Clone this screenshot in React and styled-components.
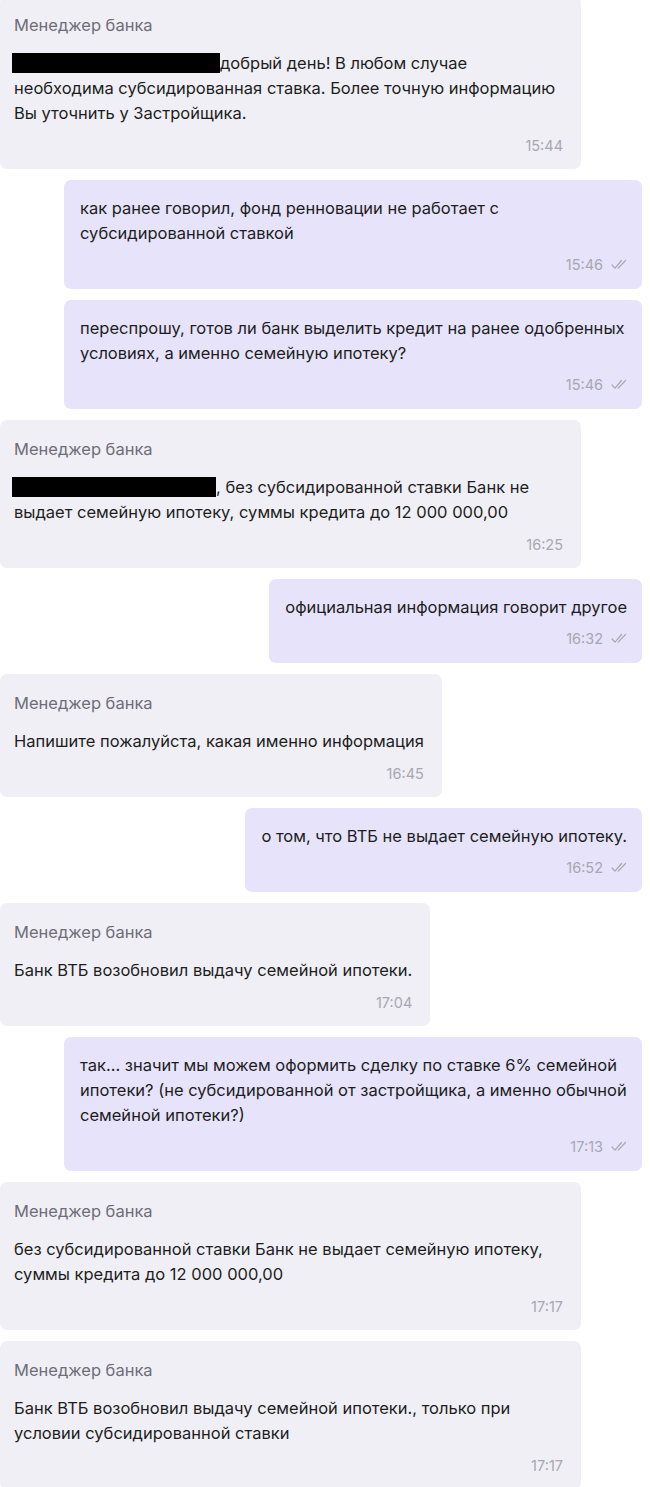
import React from "react";
import styled, { createGlobalStyle } from "styled-components";

const GlobalStyle = createGlobalStyle`
  html, body {
    margin: 0;
    padding: 0;
    background: #ffffff;
  }
  body {
    font-family: Inter, "Noto Sans", "DejaVu Sans", sans-serif;
    -webkit-font-smoothing: antialiased;
  }
`;

const Chat = styled.div`
  display: flex;
  flex-direction: column;
  gap: 11px;
  width: 650px;
  margin-top: -4px;
  overflow: hidden;
`;

const Bubble = styled.div`
  box-sizing: border-box;
  border-radius: 7px;
  background: ${(p) => (p.$own ? "#e6e3fa" : "#f0eff5")};
  align-self: ${(p) => (p.$own ? "flex-end" : "flex-start")};
  margin-right: ${(p) => (p.$own ? "8px" : "0")};
  width: ${(p) => (p.$full ? (p.$own ? "578px" : "581px") : "auto")};
  padding: ${(p) => (p.$own ? "15.5px 15px 15px 16px" : "19px 18px 14px 14px")};
  display: flex;
  flex-direction: column;
`;

const Sender = styled.div`
  font-size: 16.5px;
  line-height: 20px;
  color: #6e6d78;
  margin-bottom: 15.5px;
`;

const Text = styled.div`
  font-size: 16.5px;
  line-height: 25px;
  color: #1d1d22;
  white-space: nowrap;
`;

const Redacted = styled.span`
  display: inline-block;
  width: ${(p) => p.$w}px;
  height: 20px;
  background: #000;
  vertical-align: -4px;
  margin-left: -2px;
`;

const Meta = styled.div`
  display: flex;
  justify-content: flex-end;
  align-items: center;
  gap: 8px;
  margin-top: ${(p) => (p.$own ? "8.5px" : "9.5px")};
  height: 20px;
  font-size: 14.5px;
  color: #a8a7b1;
`;

const Checks = () => (
  <svg width="16" height="11" viewBox="0 0 16 11" fill="none">
    <path
      d="M1 6 L4 9.2 L10.5 1.5 M7.2 9.2 L14.5 1.5"
      stroke="#a8a7b1"
      strokeWidth="1.2"
      strokeLinecap="round"
      strokeLinejoin="round"
    />
  </svg>
);

const Message = ({ own, full, name, time, children }) => (
  <Bubble $own={own} $full={full}>
    {name && <Sender>{name}</Sender>}
    <Text>{children}</Text>
    <Meta $own={own}>
      <span>{time}</span>
      {own && <Checks />}
    </Meta>
  </Bubble>
);

const MANAGER = "Менеджер банка";

export default function App() {
  return (
    <>
      <GlobalStyle />
      <Chat>
        <Message name={MANAGER} time="15:44" full>
          <Redacted $w={208} />
          добрый день! В любом случае
          <br />
          необходима субсидированная ставка. Более точную информацию
          <br />
          Вы уточнить у Застройщика.
        </Message>
        <Message own full time="15:46">
          как ранее говорил, фонд ренновации не работает с
          <br />
          субсидированной ставкой
        </Message>
        <Message own full time="15:46">
          переспрошу, готов ли банк выделить кредит на ранее одобренных
          <br />
          условиях, а именно семейную ипотеку?
        </Message>
        <Message name={MANAGER} time="16:25" full>
          <Redacted $w={204} />, без субсидированной ставки Банк не
          <br />
          выдает семейную ипотеку, суммы кредита до 12 000 000,00
        </Message>
        <Message own time="16:32">
          официальная информация говорит другое
        </Message>
        <Message name={MANAGER} time="16:45">
          Напишите пожалуйста, какая именно информация
        </Message>
        <Message own time="16:52">
          о том, что ВТБ не выдает семейную ипотеку.
        </Message>
        <Message name={MANAGER} time="17:04">
          Банк ВТБ возобновил выдачу семейной ипотеки.
        </Message>
        <Message own full time="17:13">
          так... значит мы можем оформить сделку по ставке 6% семейной
          <br />
          ипотеки? (не субсидированной от застройщика, а именно обычной
          <br />
          семейной ипотеки?)
        </Message>
        <Message name={MANAGER} time="17:17" full>
          без субсидированной ставки Банк не выдает семейную ипотеку,
          <br />
          суммы кредита до 12 000 000,00
        </Message>
        <Message name={MANAGER} time="17:17" full>
          Банк ВТБ возобновил выдачу семейной ипотеки., только при
          <br />
          условии субсидированной ставки
        </Message>
      </Chat>
    </>
  );
}
